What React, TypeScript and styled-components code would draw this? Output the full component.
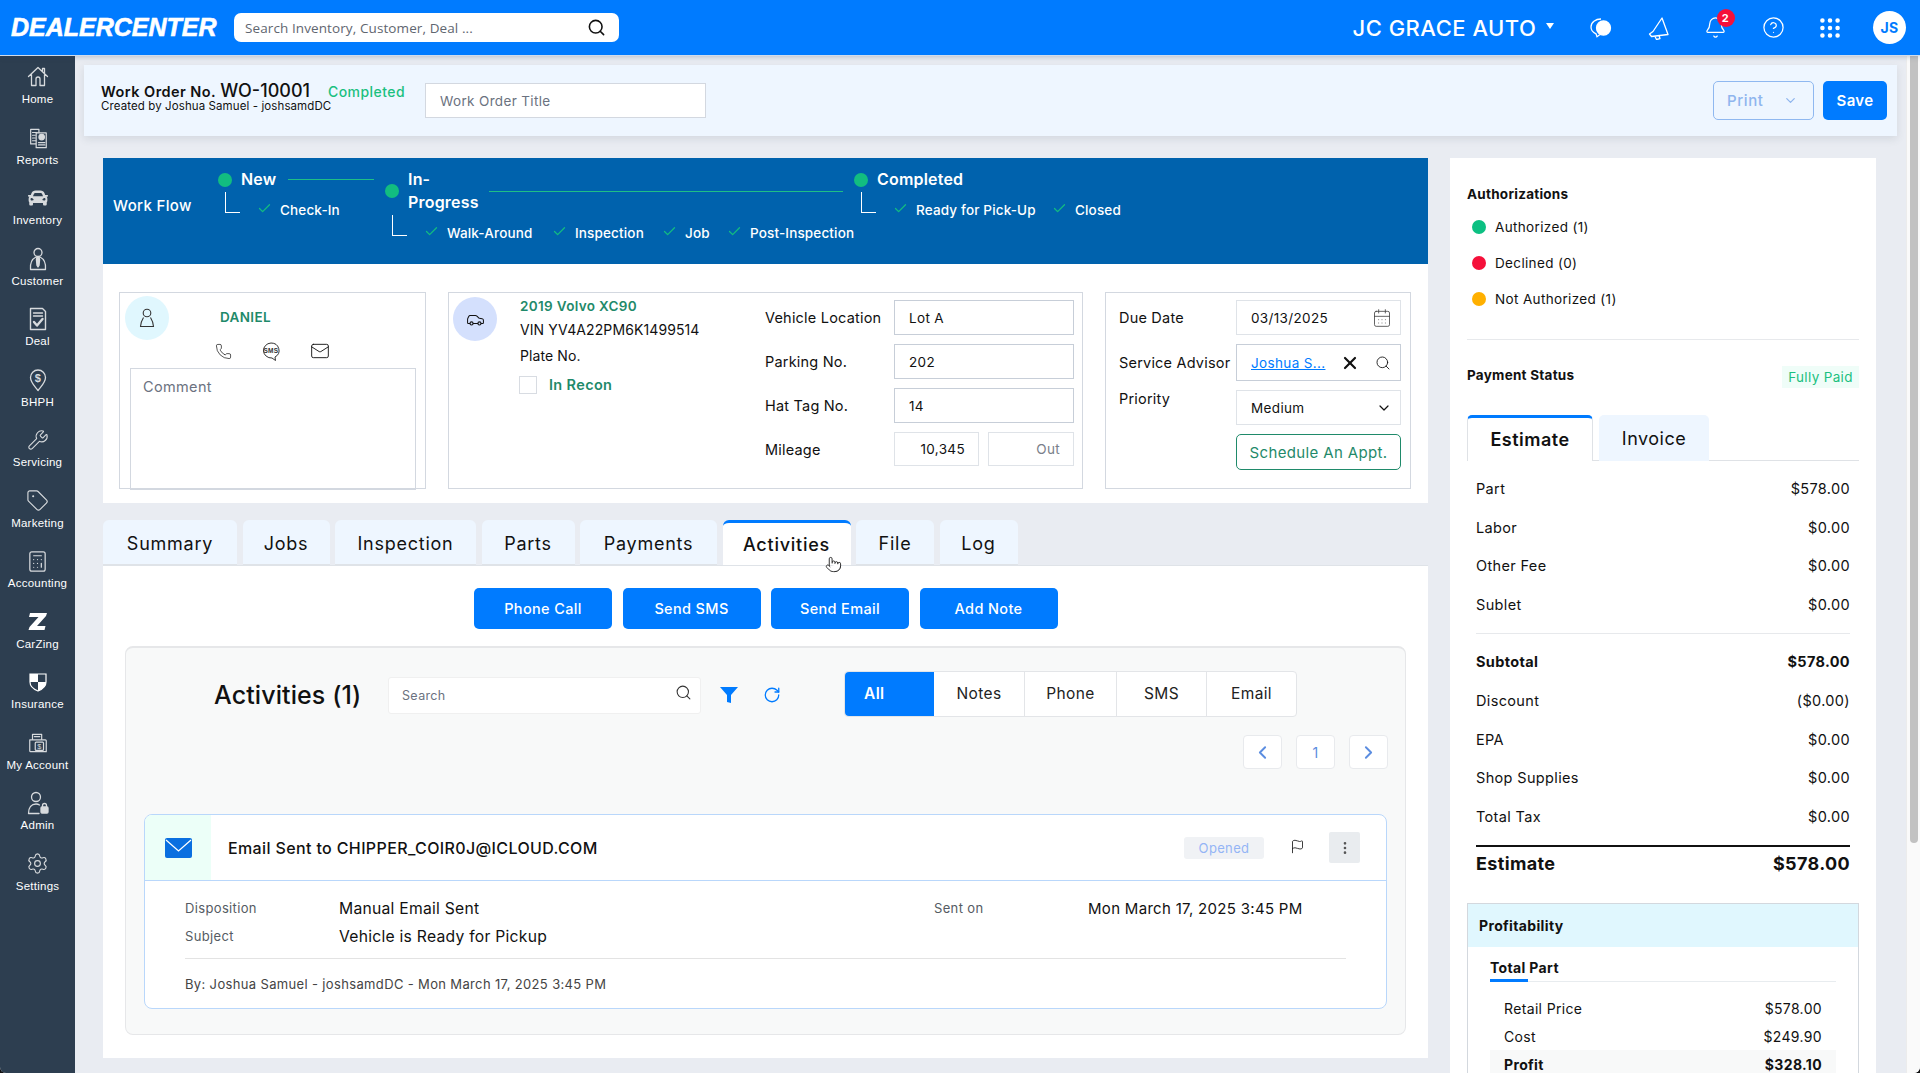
import React from "react";
import styled, { createGlobalStyle } from "styled-components";
import {
  Bell,
  Calculator,
  CalendarDays,
  Car,
  Check,
  ChevronDown,
  ChevronLeft,
  ChevronRight,
  CircleHelp,
  EllipsisVertical,
  Flag,
  Grip,
  Mail,
  Phone,
  Pointer,
  RotateCw,
  Search,
  Settings,
  Tag,
  Wrench,
  X,
} from "lucide-react";
import { FaCar } from "react-icons/fa";

const SANS = `"Inter", "Liberation Sans", sans-serif`;
const BLUE = "#007bff";
const GREEN = "#1f8a6a";
const LINE = "#d3d8e0";

const GlobalStyle = createGlobalStyle`
  html, body {
    margin: 0;
    height: 100%;
    overflow: hidden;
    background: #111;
    font-family: ${SANS};
    color: #111;
    letter-spacing: 0.35px;
  }
  * { box-sizing: border-box; }
`;

const Page = styled.div`
  height: 1073px;
  width: 1920px;
  display: flex;
  flex-direction: column;
  overflow: hidden;
  position: relative;
  background: #e9ecf2;
  border-radius: 0 0 6px 6px;
`;

/* top bar */
const TopBar = styled.header`
  height: 56px;
  flex: none;
  background: ${BLUE};
  border-bottom: 1px solid #cfdcec;
  display: flex;
  align-items: center;
  padding: 0 14px 0 11px;
  color: #fff;
  position: relative;
  z-index: 2;
  box-shadow: 0 1px 5px rgba(40, 60, 90, 0.25);
`;
const Logo = styled.div`
  width: 223px;
  font: italic 700 25px "Liberation Sans", sans-serif;
  letter-spacing: 0;
  -webkit-text-stroke: 0.6px #fff;
`;
const TopSearch = styled.div`
  width: 385px;
  height: 29px;
  background: #fff;
  border-radius: 7px;
  display: flex;
  align-items: center;
  justify-content: space-between;
  padding: 0 13px 0 11px;
  color: #5f6670;
  font: 13.5px "Open Sans", sans-serif;
  letter-spacing: 0.1px;
  svg { color: #111; }
`;
const TopRight = styled.div`
  margin-left: auto;
  display: flex;
  align-items: center;
`;
const DealerName = styled.div`
  font-size: 22px;
  font-weight: 500;
  letter-spacing: 0.5px;
  width: 193px;
  white-space: nowrap;
`;
const DealerCaret = styled.span`
  width: 0;
  height: 0;
  border-left: 4.5px solid transparent;
  border-right: 4.5px solid transparent;
  border-top: 6px solid #fff;
  margin-right: 32px;
  margin-top: -4px;
`;
const TopIcon = styled.div`
  width: 57.5px;
  height: 32px;
  display: flex;
  align-items: center;
  justify-content: flex-start;
  position: relative;
  padding-left: 3.5px;
`;
const GridIcon = styled(TopIcon)`
  padding-left: 1px;
`;
const Badge = styled.span`
  position: absolute;
  top: -3px;
  left: 16px;
  width: 18px;
  height: 18px;
  border-radius: 50%;
  background: #f5103a;
  color: #fff;
  font-size: 11px;
  font-weight: 700;
  display: flex;
  align-items: center;
  justify-content: center;
`;
const Avatar = styled.div`
  width: 33px;
  height: 33px;
  border-radius: 50%;
  background: #fff;
  color: ${BLUE};
  font-size: 14px;
  font-weight: 700;
  display: flex;
  align-items: center;
  justify-content: center;
`;

const Body = styled.div`
  flex: 1;
  display: flex;
  min-height: 0;
`;

/* side nav */
const SideNav = styled.nav`
  width: 75px;
  flex: none;
  background: #2d3e50;
  padding-top: 4px;
  display: grid;
  grid-auto-rows: 60.5px;
`;
const NavItem = styled.div`
  display: flex;
  flex-direction: column;
  align-items: center;
  color: #fff;
  font: 11.5px "Liberation Sans", sans-serif;
  letter-spacing: 0.25px;
  white-space: nowrap;
`;
const NavIcon = styled.div`
  height: 26px;
  margin-top: 4px;
  margin-bottom: 3px;
  display: flex;
  align-items: center;
  justify-content: center;
  color: #d7dadd;
`;

/* main */
const Main = styled.main`
  flex: 1;
  min-width: 0;
  padding: 9px 9px 0;
  overflow: hidden;
`;
const TitleBar = styled.div`
  height: 71px;
  background: #eef6ff;
  box-shadow: 0 3px 8px rgba(60, 70, 90, 0.12);
  display: flex;
  align-items: center;
  padding: 0 10px 0 17px;
`;
const TitleBlock = styled.div`
  width: 227px;
  margin-top: -8px;
`;
const OrderLine = styled.div`
  display: flex;
  align-items: baseline;
  gap: 4px;
  font-size: 14.5px;
  font-weight: 600;
  letter-spacing: 0.45px;
  white-space: nowrap;
`;
const OrderNo = styled.span`
  font-size: 18px;
  font-weight: 500;
  letter-spacing: 0;
`;
const OrderMeta = styled.div`
  font-size: 11.5px;
  letter-spacing: 0.1px;
  margin-top: -2px;
  white-space: nowrap;
`;
const StatusText = styled.div`
  width: 97px;
  color: #1bc080;
  font-size: 14px;
  font-weight: 500;
  letter-spacing: 0.45px;
  margin-top: -19px;
`;
const TitleInput = styled.div`
  width: 281px;
  height: 35px;
  background: #fff;
  border: 1px solid ${LINE};
  color: #6b7280;
  font-size: 13.5px;
  padding: 0 14px;
  display: flex;
  align-items: center;
`;
const PrintButton = styled.div`
  margin-left: auto;
  width: 101px;
  height: 39px;
  border: 1px solid #8fb8f0;
  border-radius: 5px;
  color: #8fb5ee;
  font-size: 15px;
  font-weight: 500;
  letter-spacing: 0.6px;
  display: flex;
  align-items: center;
  justify-content: space-between;
  padding: 0 15px 0 13px;
`;
const SaveButton = styled.div`
  margin-left: 9px;
  width: 64px;
  height: 39px;
  background: ${BLUE};
  border-radius: 5px;
  color: #fff;
  font-size: 15px;
  font-weight: 600;
  display: flex;
  align-items: center;
  justify-content: center;
`;

const Columns = styled.div`
  display: flex;
  gap: 22px;
  padding: 22px 21px 0 19px;
  align-items: flex-start;
`;
const LeftColumn = styled.div`
  width: 1325px;
  flex: none;
`;

/* work flow */
const FlowBar = styled.div`
  height: 106px;
  background: #0062ad;
  color: #fff;
  display: flex;
  padding: 10px 0 0 10px;
`;
const FlowLabel = styled.div`
  width: 105px;
  padding-top: 28px;
  font-size: 15px;
  font-weight: 500;
`;
const Stage = styled.div<{ $w: number }>`
  width: ${(p) => p.$w}px;
  flex: none;
  position: relative;
`;
const StageHead = styled.div`
  display: flex;
  align-items: center;
`;
const StageDot = styled.span`
  width: 14px;
  height: 14px;
  border-radius: 50%;
  background: #12bd80;
  flex: none;
  margin-right: 9px;
`;
const StageName = styled.div<{ $w: number }>`
  width: ${(p) => p.$w}px;
  flex: none;
  font-size: 16px;
  font-weight: 600;
  line-height: 23px;
  letter-spacing: 0.2px;
`;
const StageLine = styled.span`
  flex: 1;
  height: 1px;
  background: #1fbf86;
  margin-right: 11px;
`;
const SubRow = styled.div`
  display: flex;
  align-items: center;
  padding-left: 7px;
  height: 31px;
  margin-top: 3px;
`;
const Elbow = styled.span`
  width: 15px;
  height: 21px;
  border-left: 1px solid #fff;
  border-bottom: 1px solid #fff;
  flex: none;
  margin: -15px 17px 0 0;
`;
const SubItem = styled.div<{ $w?: number }>`
  ${(p) => (p.$w ? `width: ${p.$w}px;` : "")}
  flex: none;
  display: flex;
  align-items: center;
  gap: 8px;
  font-size: 13.5px;
  font-weight: 500;
  letter-spacing: 0.15px;
  white-space: nowrap;
  svg { color: #12bd80; flex: none; margin-top: -2px; }
`;

/* info cards */
const InfoBand = styled.section`
  height: 239px;
  background: #fff;
  padding: 28px 17px 14px 16px;
  display: flex;
  gap: 22px;
`;
const InfoCard = styled.div<{ $w: number }>`
  width: ${(p) => p.$w}px;
  flex: none;
  height: 197px;
  border: 1px solid ${LINE};
  position: relative;
`;
const CustomerCard = styled(InfoCard)`
  padding: 3px 9px 0 10px;
`;
const Round = styled.div<{ $bg: string }>`
  width: 44px;
  height: 44px;
  border-radius: 50%;
  background: ${(p) => p.$bg};
  display: flex;
  align-items: center;
  justify-content: center;
  flex: none;
`;
const CustomerTop = styled.div`
  display: flex;
  align-items: center;
  gap: 51px;
  margin-left: -5px;
`;
const GreenName = styled.div`
  color: ${GREEN};
  font-size: 13.5px;
  font-weight: 600;
`;
const CustomerName = styled(GreenName)`
  margin-top: -3px;
`;
const ContactRow = styled.div`
  display: flex;
  height: 22px;
  margin-bottom: 6px;
  align-items: center;
  gap: 29px;
  margin-left: 85px;
  svg { flex: none; }
`;
const CommentBox = styled.div`
  height: 122px;
  border: 1px solid ${LINE};
  border-bottom-width: 2px;
  color: #6b7280;
  font-size: 14.5px;
  padding: 9px 12px;
`;
const VehicleCard = styled(InfoCard)`
  display: flex;
  padding: 4px 0 0 4px;
`;
const VehicleInfo = styled.div`
  width: 245px;
  margin-left: 23px;
`;
const VehicleTitle = styled(GreenName)`
  line-height: 18px;
  margin-bottom: 1.5px;
`;
const VehicleLine = styled.div`
  font-size: 14px;
  line-height: 26px;
  letter-spacing: 0.1px;
`;
const ReconRow = styled.div`
  display: flex;
  align-items: center;
  gap: 12px;
  margin-top: 7px;
  color: ${GREEN};
  font-size: 14.5px;
  font-weight: 600;
`;
const CheckBox = styled.span`
  width: 18px;
  height: 18px;
  border: 1px solid #d8dce2;
  display: block;
  margin-left: -1px;
`;
const FormGrid = styled.div<{ $label: number; $field: number }>`
  display: grid;
  grid-template-columns: ${(p) => p.$label}px ${(p) => p.$field}px;
  row-gap: 9px;
  align-content: start;
  font-size: 14.5px;
`;
const VehicleForm = styled(FormGrid)`
  margin-top: 3px;
`;
const DueForm = styled(FormGrid)`
  margin: 7px 0 0 13px;
`;
const FieldLabel = styled.div<{ $top?: boolean }>`
  display: flex;
  align-items: ${(p) => (p.$top ? "flex-start" : "center")};
  white-space: nowrap;
  letter-spacing: 0.2px;
`;
const Field = styled.div<{ $h?: number; $strong?: boolean }>`
  height: ${(p) => p.$h ?? 35}px;
  border: 1px solid ${(p) => (p.$strong ? "#c7ced8" : "#dfe3e8")};
  display: flex;
  align-items: center;
  justify-content: space-between;
  padding: 0 8px 0 14px;
  font-size: 13.5px;
`;
const SplitField = styled.div`
  display: grid;
  grid-template-columns: 85px 86px;
  gap: 9px;
`;
const MileValue = styled(Field)<{ $muted?: boolean }>`
  justify-content: flex-end;
  padding: 0 13px;
  color: ${(p) => (p.$muted ? "#7a808a" : "#111")};
`;
const AdvisorLink = styled.span`
  color: ${BLUE};
  text-decoration: underline;
  white-space: nowrap;
`;
const AdvisorIcons = styled.span`
  display: flex;
  align-items: center;
  gap: 15px;
  margin-right: 1px;
`;
const ScheduleButton = styled.div`
  grid-column: 2;
  height: 36px;
  border: 1px solid ${GREEN};
  border-radius: 5px;
  color: ${GREEN};
  font-size: 15px;
  font-weight: 400;
  display: flex;
  align-items: center;
  justify-content: center;
  white-space: nowrap;
`;

/* tabs */
const TabRow = styled.div`
  display: flex;
  gap: 5.5px;
  margin-top: 17px;
  height: 45px;
`;
const Tab = styled.div<{ $w: number; $active?: boolean }>`
  width: ${(p) => p.$w}px;
  background: ${(p) => (p.$active ? "#fff" : "#eef6ff")};
  border-top: ${(p) => (p.$active ? `3px solid ${BLUE}` : "none")};
  padding-top: ${(p) => (p.$active ? "0" : "2px")};
  border-radius: 6px 6px 0 0;
  border-bottom: ${(p) => (p.$active ? "none" : `1px solid #dfe3e8`)};
  display: flex;
  align-items: center;
  justify-content: center;
  font-size: 18px;
  font-weight: ${(p) => (p.$active ? 500 : 400)};
  letter-spacing: 0.75px;
`;
const TabBody = styled.div`
  height: 493px;
  background: #fff;
  border-top: 1px solid #dfe3e8;
  padding: 22px 22px 0;
`;
const ActionRow = styled.div`
  display: flex;
  gap: 10.5px;
  margin-left: 349px;
`;
const ActionButton = styled.div`
  width: 138px;
  height: 41px;
  background: ${BLUE};
  color: #fff;
  border-radius: 5px;
  font-size: 14.5px;
  font-weight: 500;
  display: flex;
  align-items: center;
  justify-content: center;
`;
const ActivityPanel = styled.div`
  margin-top: 17px;
  height: 389px;
  background: #f8f9f9;
  border: 1px solid #e6e7e9;
  border-top-width: 2px;
  border-radius: 8px;
  padding: 24px 14px 0 18px;
`;
const ActivityHead = styled.div`
  display: flex;
  align-items: center;
  height: 46px;
`;
const ActivityTitle = styled.div`
  margin-left: 70px;
  width: 174px;
  font-size: 25px;
  font-weight: 500;
  letter-spacing: 0.1px;
  white-space: nowrap;
`;
const ActivitySearch = styled.div`
  width: 313px;
  height: 37px;
  background: #fff;
  border: 1px solid #f0f0f0;
  border-radius: 3px;
  display: flex;
  align-items: center;
  justify-content: space-between;
  padding: 0 8px 0 13px;
  color: #6b7280;
  font-size: 12.5px;
  svg { color: #333; margin-top: -5px; }
`;
const ToolIcon = styled.div<{ $w: number }>`
  width: ${(p) => p.$w}px;
  display: flex;
  justify-content: center;
  color: ${BLUE};
`;
const Segments = styled.div`
  display: flex;
  height: 46px;
  width: 453px;
  margin: -3px 0 0 57px;
  background: #fff;
  border: 1px solid #e3e5e8;
  border-radius: 4px;
`;
const Segment = styled.div<{ $w: number; $active?: boolean }>`
  width: ${(p) => p.$w}px;
  flex: none;
  background: ${(p) => (p.$active ? BLUE : "transparent")};
  color: ${(p) => (p.$active ? "#fff" : "#222")};
  font-size: 15.5px;
  font-weight: ${(p) => (p.$active ? 600 : 400)};
  border-right: ${(p) => (p.$active ? "none" : "1px solid #e3e5e8")};
  border-radius: ${(p) => (p.$active ? "4px 0 0 4px" : "0")};
  display: flex;
  align-items: center;
  justify-content: ${(p) => (p.$active ? "flex-start" : "center")};
  padding-left: ${(p) => (p.$active ? "19px" : "0")};
  &:last-child { border-right: none; }
`;
const Pager = styled.div`
  display: flex;
  justify-content: flex-end;
  gap: 14px;
  margin-top: 17px;
  padding-right: 3px;
`;
const PageButton = styled.div`
  width: 39px;
  height: 34px;
  background: #fff;
  border: 1px solid #e8eaed;
  border-radius: 4px;
  color: #5b8de0;
  font-size: 14px;
  display: flex;
  align-items: center;
  justify-content: center;
`;
const EmailCard = styled.div`
  margin-top: 45px;
  margin-right: 4px;
  height: 195px;
  background: #fff;
  border: 1px solid #b9d7fb;
  border-radius: 8px;
  overflow: hidden;
`;
const EmailHead = styled.div`
  height: 66px;
  display: flex;
  align-items: center;
  border-bottom: 1px solid #b9d7fb;
`;
const EmailIconCell = styled.div`
  width: 66px;
  height: 100%;
  background: #ecfff8;
  display: flex;
  align-items: center;
  justify-content: center;
`;
const EmailSubject = styled.div`
  margin-left: 17px;
  font-size: 16px;
  font-weight: 500;
  letter-spacing: 0.37px;
`;
const OpenedBadge = styled.div`
  margin-left: auto;
  width: 80px;
  height: 22px;
  background: #f0f2f5;
  border-radius: 3px;
  color: #94b5f5;
  font-size: 13px;
  display: flex;
  align-items: center;
  justify-content: center;
`;
const FlagBox = styled.div`
  width: 65px;
  display: flex;
  justify-content: center;
  padding-left: 2px;
  svg { margin-top: -2px; }
`;
const DotsBox = styled.div`
  width: 31px;
  height: 31px;
  background: #e9ecef;
  border-radius: 2px;
  color: #555;
  margin-right: 26px;
  display: flex;
  align-items: center;
  justify-content: center;
`;
const EmailBody = styled.div`
  padding: 13px 40px 0;
`;
const EmailGrid = styled.div`
  display: grid;
  grid-template-columns: 154px 595px 154px 1fr;
  grid-auto-rows: 28px;
  align-items: center;
`;
const MetaLabel = styled.div`
  color: #555b63;
  font-size: 13px;
`;
const MetaValue = styled.div`
  font-size: 15.7px;
  letter-spacing: 0.25px;
  white-space: nowrap;
`;
const MetaDate = styled(MetaValue)`
  font-size: 15px;
  letter-spacing: 0.3px;
`;
const EmailFoot = styled.div`
  margin-top: 8px;
  border-top: 1px solid #e3e3e3;
  padding-top: 17px;
  color: #444;
  font-size: 13px;
`;

/* right column */
const SidePanel = styled.aside`
  width: 426px;
  height: 930px;
  flex: none;
  background: #fff;
  padding: 28px 17px 0;
`;
const SideTitle = styled.div`
  font-size: 13.5px;
  font-weight: 700;
  letter-spacing: 0.25px;
  line-height: 16px;
`;
const AuthList = styled.div`
  padding: 7px 5px 0;
`;
const AuthRow = styled.div`
  height: 36px;
  display: flex;
  align-items: center;
  gap: 9px;
  font-size: 13.5px;
`;
const AuthDot = styled.span<{ $c: string }>`
  width: 14px;
  height: 14px;
  border-radius: 50%;
  background: ${(p) => p.$c};
`;
const Rule = styled.div`
  height: 1px;
  background: #e7e9ec;
`;
const AuthRule = styled(Rule)`
  margin-top: 22px;
`;
const PaymentHead = styled.div`
  display: flex;
  justify-content: space-between;
  align-items: flex-start;
  padding-top: 27px;
`;
const PaidTag = styled.div`
  width: 77px;
  height: 22px;
  background: #effdf8;
  color: #1bc080;
  font-size: 13.5px;
  display: flex;
  align-items: center;
  justify-content: center;
  margin-top: -1px;
  white-space: nowrap;
`;
const SideTabs = styled.div`
  display: flex;
  gap: 6px;
  margin-top: 27px;
  height: 46px;
  border-bottom: 1px solid #dfe2e6;
`;
const SideTab = styled.div<{ $w: number; $active?: boolean }>`
  width: ${(p) => p.$w}px;
  height: 46px;
  background: ${(p) => (p.$active ? "#fff" : "#eef6ff")};
  border-radius: 5px 5px 0 0;
  border: ${(p) => (p.$active ? "1px solid #dfe2e6" : "none")};
  border-top: ${(p) => (p.$active ? `3px solid ${BLUE}` : "none")};
  border-bottom: none;
  font-size: 18px;
  font-weight: ${(p) => (p.$active ? 600 : 400)};
  letter-spacing: 0.5px;
  display: flex;
  align-items: center;
  justify-content: center;
`;
const Totals = styled.div`
  padding: 8px 9px 0;
`;
const TotalRow = styled.div<{ $bold?: boolean }>`
  height: 38.8px;
  display: flex;
  align-items: center;
  justify-content: space-between;
  font-size: 14.5px;
  font-weight: ${(p) => (p.$bold ? 700 : 400)};
`;
const TotalsRule = styled(Rule)`
  margin: 9px 0 8px;
`;
const GrandRow = styled.div`
  margin-top: 9px;
  border-top: 2px solid #111;
  height: 35px;
  display: flex;
  align-items: center;
  justify-content: space-between;
  font-size: 18px;
  font-weight: 700;
`;
const ProfitBox = styled.div`
  margin-top: 23px;
  border: 1px solid #d3d8de;
  height: 220px;
`;
const ProfitHead = styled.div`
  height: 43px;
  background: #e0f7fe;
  display: flex;
  align-items: center;
  padding-left: 11px;
  font-size: 14px;
  font-weight: 700;
`;
const ProfitInner = styled.div`
  padding: 12px 22px 0;
`;
const PartTitle = styled.div`
  font-size: 14px;
  font-weight: 700;
  line-height: 18px;
  padding-bottom: 4px;
  border-bottom: 1px solid #e8ecef;
  position: relative;
  &::after {
    content: "";
    position: absolute;
    left: 0;
    bottom: -1px;
    width: 38px;
    height: 3px;
    background: ${BLUE};
  }
`;
const PartRows = styled.div`
  margin-top: 12px;
`;
const PartRow = styled.div<{ $bold?: boolean }>`
  height: 28px;
  display: flex;
  align-items: center;
  justify-content: space-between;
  padding: 0 14px;
  font-size: 14px;
  font-weight: ${(p) => (p.$bold ? 700 : 400)};
  background: ${(p) => (p.$bold ? "#f8f9f9" : "transparent")};
`;

/* fake browser scrollbar */
const ScrollTrack = styled.div`
  width: 14px;
  flex: none;
  background: #fafafa;
  border-left: 1px solid #ececec;
  padding: 0 2px 0 3px;
`;
const ScrollThumb = styled.div`
  height: 787px;
  background: #c2c2c2;
  border-radius: 0 0 5px 5px;
`;
const Cursor = styled.div`
  position: absolute;
  left: 825px;
  top: 556px;
  color: #222;
  svg { fill: #fff; }
`;

const Stroke = { fill: "none", stroke: "currentColor", strokeWidth: 1.3, strokeLinecap: "round", strokeLinejoin: "round" } as const;

const HomeIcon = () => (
  <svg width="24" height="24" viewBox="0 0 24 24" {...Stroke}>
    <path d="M2.5 11.5 12 2.5l9.5 9M5.5 9.500v11h4.500v-6.500a2 2 0 0 1 4 0v6.500h4.500v-11M16.500 6V3.500h2v4.500" />
  </svg>
);
const ReportsIcon = () => (
  <svg width="22" height="22" viewBox="0 0 24 24" {...Stroke}>
    <path d="M4 2.500h9v16H4zM6 6h5M6 9h3M6 12h3M6 15h5" />
    <path d="M10 6.500h11v16H10z" fill="#2d3e50" />
    <circle cx="16" cy="11" r="3" fill="currentColor" />
    <path d="M12.500 17h7M12.500 19.500h7" />
  </svg>
);
const CustomerIcon = () => (
  <svg width="24" height="24" viewBox="0 0 24 24" {...Stroke}>
    <circle cx="12" cy="5.500" r="4" />
    <path d="M4.500 22.500c-.5-5 .5-10 5.500-12.500h4c5 2.500 6 7.500 5.500 12.500z" />
    <path d="M11 10.500h2l.6 2-.6 6-1 1.500-1-1.500-.6-6z" fill="currentColor" />
  </svg>
);
const DealIcon = () => (
  <svg width="22" height="24" viewBox="0 0 22 24" {...Stroke}>
    <path d="M3.500 1.500h12l3 3v18h-15zM6.500 6h9M6.500 9h9" strokeWidth="1.400" />
    <path d="m7 15 3 3.500 5.500-6.500" strokeWidth="2.400" />
  </svg>
);
const BhphIcon = () => (
  <svg width="20" height="24" viewBox="0 0 20 24" {...Stroke}>
    <path d="M10 22.500C7 18.500 2.500 14.500 2.500 9.500a7.500 7.500 0 0 1 15 0c0 5-4.500 9-7.500 13z" />
    <text x="10" y="14" textAnchor="middle" fontSize="11" fontWeight="700" fill="currentColor" stroke="none" fontFamily="Liberation Sans">$</text>
  </svg>
);
const CarZingIcon = () => (
  <svg width="20" height="20" viewBox="0 0 20 20">
    <path d="M2 1h17l-1 3-9 10h8.500l-1 4H.5l1-3 9-10H1z" fill="#fff" />
  </svg>
);
const ShieldIcon = () => (
  <svg width="18" height="20" viewBox="0 0 18 20">
    <path d="M1 2h16v8c0 4-3 7-8 9-5-2-8-5-8-9z" fill="none" stroke="#fff" strokeWidth="1.200" />
    <path d="M1 2h8v8H1zM9 10h8c0 4-3 7-8 9z" fill="#fff" />
  </svg>
);
const AccountIcon = () => (
  <svg width="22" height="22" viewBox="0 0 24 24" {...Stroke}>
    <path d="M6 8V2.500h10V8M8 5h6" />
    <path d="M3 8.500h17a1 1 0 0 1 1 1v12H4a1 1 0 0 1-1-1z" />
    <rect x="9" y="11" width="9" height="9" rx="1" />
    <text x="13.500" y="18.500" textAnchor="middle" fontSize="8" fill="currentColor" stroke="none" fontFamily="Liberation Sans">$</text>
  </svg>
);
const AdminIcon = () => (
  <svg width="24" height="24" viewBox="0 0 24 24" {...Stroke}>
    <circle cx="10" cy="6" r="4.500" />
    <path d="M2.500 22.500c0-6 3-9.500 7.500-9.500 1.500 0 2.500.3 3.500 1M2.500 22.500H13" />
    <rect x="15" y="16" width="7" height="6" rx="1" fill="currentColor" />
    <path d="M16.500 16v-1.500a2 2 0 0 1 4 0V16" />
  </svg>
);

const navItems: { label: string; icon: React.ReactNode }[] = [
  { label: "Home", icon: <HomeIcon /> },
  { label: "Reports", icon: <ReportsIcon /> },
  { label: "Inventory", icon: <FaCar size={20} /> },
  { label: "Customer", icon: <CustomerIcon /> },
  { label: "Deal", icon: <DealIcon /> },
  { label: "BHPH", icon: <BhphIcon /> },
  { label: "Servicing", icon: <Wrench size={22} strokeWidth={1.2} /> },
  { label: "Marketing", icon: <Tag size={23} strokeWidth={1.2} /> },
  { label: "Accounting", icon: <Calculator size={23} strokeWidth={1.3} /> },
  { label: "CarZing", icon: <CarZingIcon /> },
  { label: "Insurance", icon: <ShieldIcon /> },
  { label: "My Account", icon: <AccountIcon /> },
  { label: "Admin", icon: <AdminIcon /> },
  { label: "Settings", icon: <Settings size={23} strokeWidth={1.2} /> },
];

const ChatIcon = () => (
  <svg width="24" height="24" viewBox="0 0 24 24" fill="none" stroke="#fff" strokeWidth="1.300">
    <path d="M12 3C6.500 3 2 6.500 2 11c0 3 2 5.500 5 6.800l1 3 3-2.300" />
    <circle cx="14.500" cy="12" r="7" fill="#fff" />
  </svg>
);
const HornIcon = () => (
  <svg width="24" height="24" viewBox="0 0 24 24" fill="none" stroke="#fff" strokeWidth="1.300" strokeLinejoin="round">
    <path d="M15 2 6 15.500 2.500 18l2 2.500L21 18.500z" />
    <path d="m8 20.500 1.500 3 3.500-.8-1-3.200" />
  </svg>
);
const EnvelopeIcon = () => (
  <svg width="27" height="20" viewBox="0 0 27 20">
    <rect width="27" height="20" rx="2" fill="#0a6fe0" />
    <path d="m1 2 12.500 11L26 2" fill="none" stroke="#fff" strokeWidth="1.300" />
  </svg>
);
const FunnelIcon = () => (
  <svg width="18" height="18" viewBox="0 0 18 18">
    <path d="M0 1h18l-7 8v8l-4-1V9z" fill={BLUE} />
  </svg>
);
const PersonIcon = () => (
  <svg width="18" height="20" viewBox="0 0 18 20" fill="none" stroke="#333" strokeWidth="1.100">
    <circle cx="9" cy="5" r="3.800" />
    <path d="M5.500 9.500C4 12 2.500 15 2.500 18.500h13c0-3.500-1.500-6.500-3-9" />
  </svg>
);
const SmsIcon = () => (
  <svg width="20" height="20" viewBox="0 0 20 20" fill="none" stroke="#333" strokeWidth="1">
    <path d="M10 2a8 7.500 0 1 0 1 15l3.500 2.500-.5-3.500A8 7.500 0 0 0 10 2z" />
    <text x="10" y="11.800" textAnchor="middle" fontSize="6.500" fontWeight="700" fill="#333" stroke="none" fontFamily="Liberation Sans">SMS</text>
  </svg>
);

const totalsTop = [
  ["Part", "$578.00"],
  ["Labor", "$0.00"],
  ["Other Fee", "$0.00"],
  ["Sublet", "$0.00"],
];
const totalsBottom = [
  ["Discount", "($0.00)"],
  ["EPA", "$0.00"],
  ["Shop Supplies", "$0.00"],
  ["Total Tax", "$0.00"],
];
const tabs = [
  { label: "Summary", w: 134 },
  { label: "Jobs", w: 87 },
  { label: "Inspection", w: 141 },
  { label: "Parts", w: 93 },
  { label: "Payments", w: 137 },
  { label: "Activities", w: 128, active: true },
  { label: "File", w: 78 },
  { label: "Log", w: 78 },
];
const segments = [
  { label: "All", w: 89, active: true },
  { label: "Notes", w: 91 },
  { label: "Phone", w: 92 },
  { label: "SMS", w: 90 },
  { label: "Email", w: 89 },
];

function SubCheck({ label, w }: { label: string; w?: number }) {
  return (
    <SubItem $w={w}>
      <Check size={15} strokeWidth={2} />
      {label}
    </SubItem>
  );
}

function App() {
  return (
    <Page>
      <GlobalStyle />
      <TopBar>
        <Logo>DEALERCENTER</Logo>
        <TopSearch>
          Search Inventory, Customer, Deal ...
          <Search size={19} strokeWidth={2} />
        </TopSearch>
        <TopRight>
          <DealerName>JC GRACE AUTO</DealerName>
          <DealerCaret />
          <TopIcon><ChatIcon /></TopIcon>
          <TopIcon><HornIcon /></TopIcon>
          <TopIcon>
            <Bell size={23} strokeWidth={1.3} />
            <Badge>2</Badge>
          </TopIcon>
          <TopIcon><CircleHelp size={23} strokeWidth={1.3} /></TopIcon>
          <GridIcon><Grip size={26} strokeWidth={2.2} /></GridIcon>
          <Avatar>JS</Avatar>
        </TopRight>
      </TopBar>

      <Body>
        <SideNav>
          {navItems.map((n) => (
            <NavItem key={n.label}>
              <NavIcon>{n.icon}</NavIcon>
              {n.label}
            </NavItem>
          ))}
        </SideNav>

        <Main>
          <TitleBar>
            <TitleBlock>
              <OrderLine>Work Order No. <OrderNo>WO-10001</OrderNo></OrderLine>
              <OrderMeta>Created by Joshua Samuel - joshsamdDC</OrderMeta>
            </TitleBlock>
            <StatusText>Completed</StatusText>
            <TitleInput>Work Order Title</TitleInput>
            <PrintButton>Print <ChevronDown size={15} /></PrintButton>
            <SaveButton>Save</SaveButton>
          </TitleBar>

          <Columns>
            <LeftColumn>
              <FlowBar>
                <FlowLabel>Work Flow</FlowLabel>
                <Stage $w={167}>
                  <StageHead>
                    <StageDot />
                    <StageName $w={47}>New</StageName>
                    <StageLine />
                  </StageHead>
                  <SubRow>
                    <Elbow />
                    <SubCheck label="Check-In" />
                  </SubRow>
                </Stage>
                <Stage $w={469}>
                  <StageHead>
                    <StageDot />
                    <StageName $w={81}>In-<br />Progress</StageName>
                    <StageLine />
                  </StageHead>
                  <SubRow>
                    <Elbow />
                    <SubCheck label="Walk-Around" w={128} />
                    <SubCheck label="Inspection" w={110} />
                    <SubCheck label="Job" w={65} />
                    <SubCheck label="Post-Inspection" />
                  </SubRow>
                </Stage>
                <Stage $w={300}>
                  <StageHead>
                    <StageDot />
                    <StageName $w={120}>Completed</StageName>
                  </StageHead>
                  <SubRow>
                    <Elbow />
                    <SubCheck label="Ready for Pick-Up" w={159} />
                    <SubCheck label="Closed" />
                  </SubRow>
                </Stage>
              </FlowBar>

              <InfoBand>
                <CustomerCard $w={307}>
                  <CustomerTop>
                    <Round $bg="#e0f7fe"><PersonIcon /></Round>
                    <CustomerName>DANIEL</CustomerName>
                  </CustomerTop>
                  <ContactRow>
                    <Phone size={17} strokeWidth={1} />
                    <SmsIcon />
                    <Mail size={20} strokeWidth={1.1} />
                  </ContactRow>
                  <CommentBox>Comment</CommentBox>
                </CustomerCard>

                <VehicleCard $w={635}>
                  <Round $bg="#d4e0fd"><Car size={19} strokeWidth={1.3} /></Round>
                  <VehicleInfo>
                    <VehicleTitle>2019 Volvo XC90</VehicleTitle>
                    <VehicleLine>VIN YV4A22PM6K1499514</VehicleLine>
                    <VehicleLine>Plate No.</VehicleLine>
                    <ReconRow><CheckBox />In Recon</ReconRow>
                  </VehicleInfo>
                  <VehicleForm $label={129} $field={180}>
                    <FieldLabel>Vehicle Location</FieldLabel>
                    <Field $strong>Lot A</Field>
                    <FieldLabel>Parking No.</FieldLabel>
                    <Field $strong>202</Field>
                    <FieldLabel>Hat Tag No.</FieldLabel>
                    <Field $strong>14</Field>
                    <FieldLabel>Mileage</FieldLabel>
                    <SplitField>
                      <MileValue $h={34}>10,345</MileValue>
                      <MileValue $h={34} $muted>Out</MileValue>
                    </SplitField>
                  </VehicleForm>
                </VehicleCard>

                <InfoCard $w={306}>
                  <DueForm $label={117} $field={165}>
                    <FieldLabel>Due Date</FieldLabel>
                    <Field>
                      03/13/2025
                      <CalendarDays size={20} strokeWidth={1} color="#444" />
                    </Field>
                    <FieldLabel>Service Advisor</FieldLabel>
                    <Field $h={37} $strong>
                      <AdvisorLink>Joshua S...</AdvisorLink>
                      <AdvisorIcons>
                        <X size={20} strokeWidth={2.6} />
                        <Search size={16} strokeWidth={1.3} />
                      </AdvisorIcons>
                    </Field>
                    <FieldLabel $top>Priority</FieldLabel>
                    <Field>
                      Medium
                      <ChevronDown size={16} strokeWidth={1.8} />
                    </Field>
                    <ScheduleButton>Schedule An Appt.</ScheduleButton>
                  </DueForm>
                </InfoCard>
              </InfoBand>

              <TabRow>
                {tabs.map((t) => (
                  <Tab key={t.label} $w={t.w} $active={t.active}>{t.label}</Tab>
                ))}
              </TabRow>
              <TabBody>
                <ActionRow>
                  <ActionButton>Phone Call</ActionButton>
                  <ActionButton>Send SMS</ActionButton>
                  <ActionButton>Send Email</ActionButton>
                  <ActionButton>Add Note</ActionButton>
                </ActionRow>
                <ActivityPanel>
                  <ActivityHead>
                    <ActivityTitle>Activities (1)</ActivityTitle>
                    <ActivitySearch>
                      Search
                      <Search size={17} strokeWidth={1.5} />
                    </ActivitySearch>
                    <ToolIcon $w={55}><FunnelIcon /></ToolIcon>
                    <ToolIcon $w={31}><RotateCw size={18} strokeWidth={1.7} /></ToolIcon>
                    <Segments>
                      {segments.map((s) => (
                        <Segment key={s.label} $w={s.w} $active={s.active}>{s.label}</Segment>
                      ))}
                    </Segments>
                  </ActivityHead>
                  <Pager>
                    <PageButton><ChevronLeft size={21} strokeWidth={2.2} /></PageButton>
                    <PageButton>1</PageButton>
                    <PageButton><ChevronRight size={21} strokeWidth={2.2} /></PageButton>
                  </Pager>
                  <EmailCard>
                    <EmailHead>
                      <EmailIconCell><EnvelopeIcon /></EmailIconCell>
                      <EmailSubject>Email Sent to CHIPPER_COIR0J@ICLOUD.COM</EmailSubject>
                      <OpenedBadge>Opened</OpenedBadge>
                      <FlagBox><Flag size={15} strokeWidth={1.3} /></FlagBox>
                      <DotsBox><EllipsisVertical size={16} /></DotsBox>
                    </EmailHead>
                    <EmailBody>
                      <EmailGrid>
                        <MetaLabel>Disposition</MetaLabel>
                        <MetaValue>Manual Email Sent</MetaValue>
                        <MetaLabel>Sent on</MetaLabel>
                        <MetaDate>Mon March 17, 2025 3:45 PM</MetaDate>
                        <MetaLabel>Subject</MetaLabel>
                        <MetaValue>Vehicle is Ready for Pickup</MetaValue>
                      </EmailGrid>
                      <EmailFoot>By: Joshua Samuel - joshsamdDC - Mon March 17, 2025 3:45 PM</EmailFoot>
                    </EmailBody>
                  </EmailCard>
                </ActivityPanel>
              </TabBody>
            </LeftColumn>

            <SidePanel>
              <SideTitle>Authorizations</SideTitle>
              <AuthList>
                <AuthRow><AuthDot $c="#0cc082" />Authorized (1)</AuthRow>
                <AuthRow><AuthDot $c="#f5103a" />Declined (0)</AuthRow>
                <AuthRow><AuthDot $c="#ffb000" />Not Authorized (1)</AuthRow>
              </AuthList>
              <AuthRule />
              <PaymentHead>
                <SideTitle>Payment Status</SideTitle>
                <PaidTag>Fully Paid</PaidTag>
              </PaymentHead>
              <SideTabs>
                <SideTab $w={126} $active>Estimate</SideTab>
                <SideTab $w={110}>Invoice</SideTab>
              </SideTabs>
              <Totals>
                {totalsTop.map(([k, v]) => (
                  <TotalRow key={k}><span>{k}</span><span>{v}</span></TotalRow>
                ))}
                <TotalsRule />
                <TotalRow $bold><span>Subtotal</span><span>$578.00</span></TotalRow>
                {totalsBottom.map(([k, v]) => (
                  <TotalRow key={k}><span>{k}</span><span>{v}</span></TotalRow>
                ))}
                <GrandRow><span>Estimate</span><span>$578.00</span></GrandRow>
              </Totals>
              <ProfitBox>
                <ProfitHead>Profitability</ProfitHead>
                <ProfitInner>
                  <PartTitle>Total Part</PartTitle>
                  <PartRows>
                    <PartRow><span>Retail Price</span><span>$578.00</span></PartRow>
                    <PartRow><span>Cost</span><span>$249.90</span></PartRow>
                    <PartRow $bold><span>Profit</span><span>$328.10</span></PartRow>
                  </PartRows>
                </ProfitInner>
              </ProfitBox>
            </SidePanel>
          </Columns>
        </Main>

        <ScrollTrack><ScrollThumb /></ScrollTrack>
      </Body>

      <Cursor><Pointer size={17} strokeWidth={1.3} /></Cursor>
    </Page>
  );
}

export default App;
